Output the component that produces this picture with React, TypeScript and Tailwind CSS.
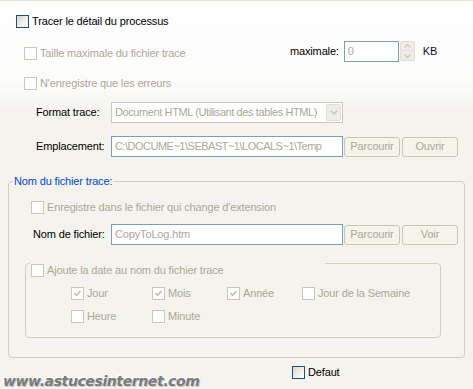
import React from "react";

const font = "font-['Liberation_Sans',Arial,sans-serif]";

function Check({ disabled = false, checked = false }: { disabled?: boolean; checked?: boolean }) {
  return (
    <span
      className={
        disabled
          ? "flex h-[13px] w-[13px] shrink-0 items-center justify-center border border-[#cac8bb] bg-white"
          : "flex h-[13px] w-[13px] shrink-0 items-center justify-center border border-[#1c5180] bg-[linear-gradient(135deg,#d6d5cd_0%,#f2f1ec_60%,#ffffff_100%)]"
      }
    >
      {checked && (
        <svg width="9" height="9" viewBox="0 0 9 9">
          <path d="M1.5 4.2 L3.5 6.3 L7.5 2.2" fill="none" stroke="#c3c1b3" strokeWidth="1.7" />
        </svg>
      )}
    </span>
  );
}

function CheckRow({
  label,
  disabled = true,
  checked = false,
  className = "",
}: {
  label: string;
  disabled?: boolean;
  checked?: boolean;
  className?: string;
}) {
  return (
    <div className={`flex h-[13px] items-center gap-[3px] ${className}`}>
      <Check disabled={disabled} checked={checked} />
      <span className={disabled ? "whitespace-nowrap leading-[13px] text-[#aca899]" : "whitespace-nowrap leading-[13px] text-black"}>
        {label}
      </span>
    </div>
  );
}

function Btn({ children }: { children: React.ReactNode }) {
  return (
    <div className="flex h-[20px] w-[56px] items-center justify-center rounded-[3px] border border-[#c9c7ba] bg-[#f5f4ea] text-[#aca899]">
      {children}
    </div>
  );
}

function TextBox({ value, className = "" }: { value: string; className?: string }) {
  return (
    <div className={`flex h-[21px] items-center overflow-hidden whitespace-nowrap border border-[#7f9db9] bg-white pl-[3px] text-[#aca899] ${className}`}>
      {value}
    </div>
  );
}

export default function App() {
  return (
    <div
      className={`${font} relative flex h-[389px] w-[473px] flex-col overflow-hidden border-t border-[#e6e4d6] bg-[linear-gradient(to_bottom,#fefefe_0px,#fcfcfb_80px,#f4f3ee_112px,#f4f3ee_100%)] text-[11px] tracking-[-0.15px] text-black`}
    >
      {/* Tracer */}
      <CheckRow label="Tracer le détail du processus" disabled={false} className="ml-[16px] mt-[14px]" />

      {/* Taille maximale */}
      <div className="mt-[13px] flex h-[21px]">
        <div className="w-[290px] pl-[24px] pt-[6px]">
          <CheckRow label="Taille maximale du fichier trace" />
        </div>
        <div className="flex items-center">
          <span className="mr-[5px] whitespace-nowrap">maximale:</span>
          <TextBox value="0" className="w-[55px]" />
          <div className="ml-[1px] flex h-[20px] w-[15px] flex-col self-start">
            <div className="flex h-[10px] items-center justify-center rounded-t-[2px] border border-[#e0dfd7] bg-[#efeee6]">
              <svg width="7" height="4" viewBox="0 0 7 4">
                <path d="M0.5 3.5 L3.5 0.5 L6.5 3.5" fill="none" stroke="#c9c7ba" strokeWidth="1.2" />
              </svg>
            </div>
            <div className="flex h-[10px] items-center justify-center rounded-b-[2px] border border-t-0 border-[#e0dfd7] bg-[#efeee6]">
              <svg width="7" height="4" viewBox="0 0 7 4">
                <path d="M0.5 0.5 L3.5 3.5 L6.5 0.5" fill="none" stroke="#c9c7ba" strokeWidth="1.2" />
              </svg>
            </div>
          </div>
          <span className="ml-[8px] text-[#0a0a3a]">KB</span>
        </div>
      </div>

      {/* N'enregistre */}
      <CheckRow label="N'enregistre que les erreurs" className="ml-[24px] mt-[15px]" />

      {/* Format trace */}
      <div className="mt-[12px] flex h-[21px] items-center">
        <span className="w-[111px] pl-[36px]">Format trace:</span>
        <div className="flex h-[21px] w-[232px] items-center border border-[#c9c7ba] bg-white pl-[3px] pr-[1px]">
          <span className="flex-1 overflow-hidden whitespace-nowrap tracking-[-0.4px] text-[#aca899]">
            Document HTML (Utilisant des tables HTML)
          </span>
          <div className="flex h-[17px] w-[15px] shrink-0 items-center justify-center rounded-[2px] border border-[#e0dfd7] bg-[#efeee6]">
            <svg width="8" height="5" viewBox="0 0 8 5">
              <path d="M0.8 0.8 L4 4 L7.2 0.8" fill="none" stroke="#c9c7ba" strokeWidth="1.6" />
            </svg>
          </div>
        </div>
      </div>

      {/* Emplacement */}
      <div className="mt-[13px] flex h-[21px] items-center">
        <span className="w-[111px] pl-[36px]">Emplacement:</span>
        <TextBox value="C:\DOCUME~1\SEBAST~1\LOCALS~1\Temp" className="w-[232px] tracking-[-0.5px]" />
        <div className="ml-[1px] flex gap-[2px]">
          <Btn>Parcourir</Btn>
          <Btn>Ouvrir</Btn>
        </div>
      </div>

      {/* Nom du fichier trace */}
      <fieldset className="ml-[8px] mt-[18px] h-[183px] w-[457px] rounded-[4px] border border-[#d0d0bf]">
        <legend className="ml-[4px] h-[13px] px-[1px] leading-[13px] text-[#0046d5]">Nom du fichier trace:</legend>

        <CheckRow label="Enregistre dans le fichier qui change d'extension" className="ml-[22px] mt-[13px]" />

        <div className="mt-[10px] flex h-[21px] items-center">
          <span className="w-[102px] pl-[24px]">Nom de fichier:</span>
          <TextBox value="CopyToLog.htm" className="w-[232px]" />
          <div className="ml-[1px] flex gap-[2px]">
            <Btn>Parcourir</Btn>
            <Btn>Voir</Btn>
          </div>
        </div>

        {/* Date group */}
        <div className="relative ml-[16px] mt-[18px] h-[75px] w-[416px] rounded-[4px] border border-[#d0d0bf]">
          <div className="absolute left-[4px] top-[-2px] flex h-[17px] w-[295px] items-center bg-[#f4f3ee] pl-[1px]">
            <CheckRow label="Ajoute la date au nom du fichier trace" />
          </div>
          <div className="flex pl-[45px] pt-[23px]">
            <CheckRow label="Jour" checked className="w-[81px]" />
            <CheckRow label="Mois" checked className="w-[75px]" />
            <CheckRow label="Année" checked className="w-[75px]" />
            <CheckRow label="Jour de la Semaine" />
          </div>
          <div className="mt-[10px] flex pl-[45px]">
            <CheckRow label="Heure" className="w-[81px]" />
            <CheckRow label="Minute" />
          </div>
        </div>
      </fieldset>

      {/* Defaut */}
      <CheckRow label="Defaut" disabled={false} className="ml-[292px] mt-[8px]" />

      {/* watermark */}
      <div className="pointer-events-none absolute bottom-[-3px] left-[3px] font-['DejaVu_Sans',Verdana,sans-serif] text-[14px] font-bold italic tracking-[-0.4px] text-[#7b7b7b] [text-shadow:1px_1px_0_#c8c8c8,-1px_-1px_0_#ffffff]">
        www.astucesinternet.com
      </div>
    </div>
  );
}
